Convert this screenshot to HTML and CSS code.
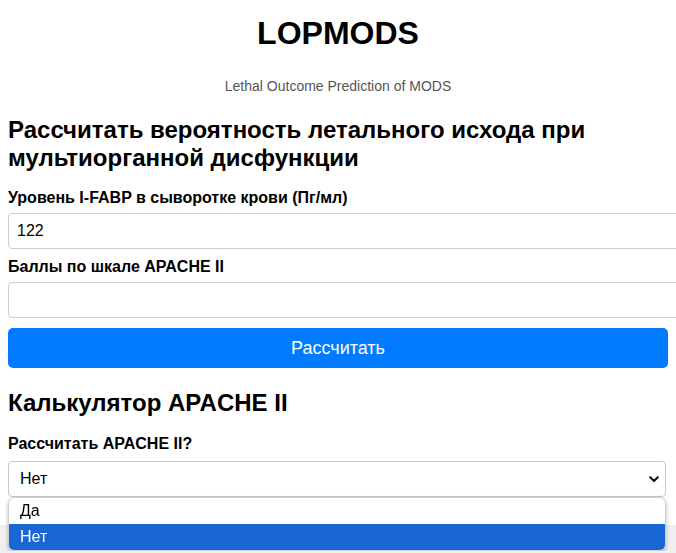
FILE: index.html
```html
<!DOCTYPE html>
<html lang="ru">
<head>
<meta charset="utf-8">
<title>LOPMODS</title>
<link rel="stylesheet" href="styles.css">
</head>
<body>
<div class="page">
  <h1 class="title">LOPMODS</h1>
  <p class="subtitle">Lethal Outcome Prediction of MODS</p>

  <h2 class="heading heading-first">Рассчитать вероятность летального исхода при мультиорганной дисфункции</h2>
  <div class="form">
    <label class="label">Уровень I-FABP в сыворотке крови (Пг/мл)</label>
    <div class="field">122</div>
    <label class="label">Баллы по шкале APACHE II</label>
    <div class="field"></div>
    <div class="btn">Рассчитать</div>
  </div>

  <h2 class="heading heading-second">Калькулятор APACHE II</h2>
  <label class="label label-select">Рассчитать APACHE II?</label>
  <div class="select">
    <span>Нет</span>
    <svg class="chevron" width="10" height="7" viewBox="0 0 10 7"><path d="M1.2 1.3 L5 5.1 L8.8 1.3" fill="none" stroke="#111" stroke-width="2.1" stroke-linecap="round" stroke-linejoin="round"/></svg>
  </div>
  <div class="menu">
    <div class="option">Да</div>
    <div class="option option-selected">Нет</div>
  </div>
</div>
<div class="hbar"></div>
</body>
</html>
```

FILE: styles.css
```css
html {
  overflow: hidden;
}
body {
  margin: 0;
  background: #ffffff;
  font-family: "Liberation Sans", Arial, sans-serif;
  color: #000;
}
.page {
  padding: 0 8px;
}
.title {
  margin: 15px 0 0;
  font-size: 32px;
  line-height: 37px;
  font-weight: bold;
  text-align: center;
}
.subtitle {
  margin: 26px 0 0;
  font-size: 14px;
  line-height: 16px;
  color: #555;
  text-align: center;
}
.heading {
  margin: 0;
  font-size: 24px;
  line-height: 28px;
  font-weight: bold;
}
.heading-first {
  margin-top: 22px;
}
.form {
  display: flex;
  flex-direction: column;
}
.label {
  display: block;
  font-size: 16px;
  line-height: 18px;
  font-weight: bold;
  margin-bottom: 6px;
}
.form .label:first-child {
  margin-top: 17px;
}
.field {
  box-sizing: border-box;
  height: 36px;
  width: calc(100% + 20px);
  border: 1px solid #ccc;
  border-radius: 4px;
  padding: 0 8px;
  font-size: 16px;
  line-height: 34px;
  margin-bottom: 9px;
}
.btn {
  margin-top: 1px;
  height: 40px;
  border-radius: 5px;
  background: #007bff;
  color: #fff;
  font-size: 18px;
  line-height: 40px;
  text-align: center;
}
.heading-second {
  margin-top: 21px;
}
.label-select {
  margin-top: 18px;
  margin-bottom: 8px;
}
.select {
  box-sizing: border-box;
  height: 36px;
  width: calc(100% - 2px);
  border: 1px solid #c8c8c8;
  border-radius: 4px;
  padding: 0 6px 0 11px;
  font-size: 16px;
  display: flex;
  align-items: center;
  justify-content: space-between;
  background: #fff;
}
.chevron {
  display: block;
}
.menu {
  position: relative;
  z-index: 2;
  width: calc(100% - 2px);
  box-sizing: border-box;
  background: #fff;
  border: 1px solid #cfcfcf;
  border-radius: 6px;
  overflow: hidden;
  box-shadow: 0 2px 4px rgba(0, 0, 0, 0.25);
}
.option {
  height: 26px;
  line-height: 26px;
  padding: 0 11px;
  font-size: 16px;
}
.option-selected {
  background: #1967d2;
  color: #fff;
}
.hbar {
  position: fixed;
  left: 0;
  right: 0;
  bottom: 0;
  height: 28px;
  background: #f0f0f0;
  z-index: 1;
}
```
